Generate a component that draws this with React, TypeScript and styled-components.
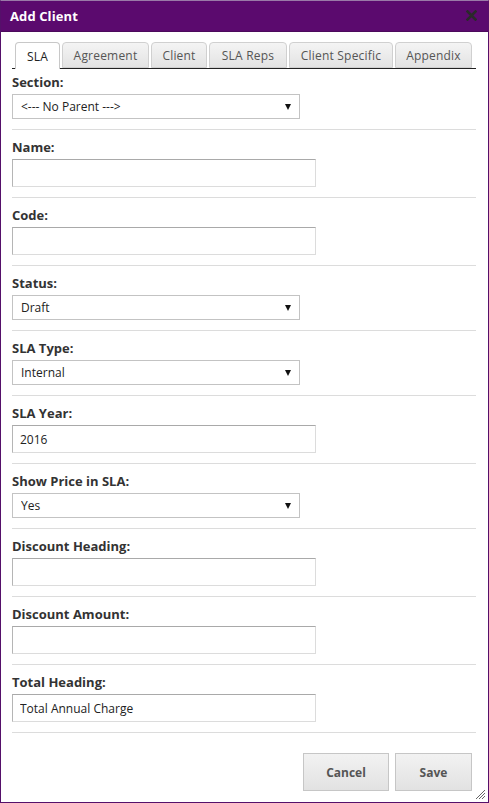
import React from "react";
import styled, { createGlobalStyle } from "styled-components";

const Global = createGlobalStyle`
  * { box-sizing: border-box; }
  html, body { margin: 0; padding: 0; background: #fff; }
  body { font-family: "Open Sans", "Liberation Sans", sans-serif; }
`;

const Window = styled.div`
  width: 489px;
  height: 803px;
  display: flex;
  flex-direction: column;
  border: 1px solid #55106a;
  border-top-color: #9a7aa8;
  background: #fff;
  position: relative;
`;

const TitleBar = styled.div`
  height: 31px;
  flex: none;
  background: #5b0a6e;
  display: flex;
  align-items: center;
  justify-content: space-between;
  padding: 0 10px 0 9px;
  border-bottom: 1px solid #4c0a5c;
`;

const Title = styled.h1`
  margin: 0;
  color: #fff;
  font-size: 13px;
  font-weight: 700;
  letter-spacing: 0.1px;
`;

const Close = styled.button`
  border: 0;
  background: none;
  padding: 0;
  width: 12px;
  height: 12px;
  display: flex;
  cursor: pointer;
`;

const Body = styled.div`
  flex: 1;
  padding: 10px 12px 0 11px;
  display: flex;
  flex-direction: column;
`;

const TabList = styled.div`
  display: flex;
  gap: 2px;
  padding-left: 3px;
  border-bottom: 1px solid #222;
  height: 27px;
`;

const Tab = styled.div<{ $active?: boolean; $w: number }>`
  flex: none;
  width: ${(p) => p.$w}px;
  height: ${(p) => (p.$active ? "27px" : "26px")};
  display: flex;
  align-items: center;
  justify-content: center;
  white-space: nowrap;
  font-size: 12px;
  letter-spacing: 0.2px;
  border: 1px solid ${(p) => (p.$active ? "#c8c8c8" : "#d0d0d0")};
  border-bottom: ${(p) => (p.$active ? "0" : "1px solid #d0d0d0")};
  border-radius: 4px 4px 0 0;
  color: ${(p) => (p.$active ? "#222" : "#555")};
  background: ${(p) =>
    p.$active ? "#fff" : "linear-gradient(#f4f4f4, #e3e3e3)"};
  position: relative;
  z-index: ${(p) => (p.$active ? 1 : 0)};
`;

const Group = styled.div<{ $first?: boolean }>`
  padding: ${(p) => (p.$first ? "5px" : "9px")} 0 10px 0;
  border-bottom: 1px solid #dcdcdc;
  display: flex;
  flex-direction: column;
  align-items: flex-start;
`;

const Label = styled.label`
  font-size: 13px;
  font-weight: 700;
  color: #333;
  line-height: 16px;
  margin-bottom: 4px;
`;

const TextInput = styled.input`
  width: 304px;
  height: 28px;
  border: 1px solid #dcdcdc;
  border-top-color: #a9a9a9;
  border-left-color: #b5b5b5;
  padding: 0 7px;
  font-family: inherit;
  font-size: 12px;
  color: #222;
  outline: none;
  background: #fff;
`;

const SelectWrap = styled.div`
  position: relative;
  width: 288px;
  height: 25px;
`;

const Select = styled.select`
  appearance: none;
  width: 100%;
  height: 100%;
  border: 1px solid #c3c3c3;
  background: #fff;
  padding: 0 8px;
  font-family: inherit;
  font-size: 12px;
  color: #222;
  outline: none;
`;

const Arrow = styled.span`
  position: absolute;
  right: 9px;
  top: 10px;
  width: 0;
  height: 0;
  border-left: 3.5px solid transparent;
  border-right: 3.5px solid transparent;
  border-top: 6px solid #111;
  pointer-events: none;
`;

const ButtonRow = styled.div`
  display: flex;
  justify-content: flex-end;
  gap: 6px;
  margin-top: 20px;
  padding-right: 4px;
`;

const Button = styled.button<{ $w: number }>`
  width: ${(p) => p.$w}px;
  height: 38px;
  border: 1px solid #c6c6c6;
  background: linear-gradient(#f2f2f2, #e2e2e2);
  font-family: inherit;
  font-size: 12px;
  font-weight: 700;
  color: #555;
  cursor: pointer;
`;

const Grip = styled.svg`
  position: absolute;
  right: 2px;
  bottom: 2px;
`;

type FieldProps = { label: string; value?: string; select?: boolean; first?: boolean };

function Field({ label, value = "", select, first }: FieldProps) {
  return (
    <Group $first={first}>
      <Label>{label}</Label>
      {select ? (
        <SelectWrap>
          <Select defaultValue={value}>
            <option>{value}</option>
          </Select>
          <Arrow />
        </SelectWrap>
      ) : (
        <TextInput defaultValue={value} />
      )}
    </Group>
  );
}

const tabs = [
  { name: "SLA", w: 45 },
  { name: "Agreement", w: 87 },
  { name: "Client", w: 56 },
  { name: "SLA Reps", w: 78 },
  { name: "Client Specific", w: 104 },
  { name: "Appendix", w: 77 },
];

export default function App() {
  return (
    <>
      <Global />
      <Window>
        <TitleBar>
          <Title>Add Client</Title>
          <Close aria-label="Close">
            <svg width="11" height="11" viewBox="0 0 11 11">
              <path d="M1.5 1.5 L9.5 9.5 M9.5 1.5 L1.5 9.5" stroke="#2a2a2a" strokeWidth="2.6" strokeLinecap="square" />
            </svg>
          </Close>
        </TitleBar>
        <Body>
          <TabList>
            {tabs.map((t, i) => (
              <Tab key={t.name} $active={i === 0} $w={t.w}>
                {t.name}
              </Tab>
            ))}
          </TabList>
          <Field first label="Section:" select value="<--- No Parent --->" />
          <Field label="Name:" />
          <Field label="Code:" />
          <Field label="Status:" select value="Draft" />
          <Field label="SLA Type:" select value="Internal" />
          <Field label="SLA Year:" value="2016" />
          <Field label="Show Price in SLA:" select value="Yes" />
          <Field label="Discount Heading:" />
          <Field label="Discount Amount:" />
          <Field label="Total Heading:" value="Total Annual Charge" />
          <ButtonRow>
            <Button $w={86}>Cancel</Button>
            <Button $w={77}>Save</Button>
          </ButtonRow>
        </Body>
        <Grip width="11" height="11" viewBox="0 0 11 11">
          <path d="M10 1 L1 10 M10 4 L4 10 M10 7 L7 10" stroke="#666" strokeWidth="1" />
        </Grip>
      </Window>
    </>
  );
}
